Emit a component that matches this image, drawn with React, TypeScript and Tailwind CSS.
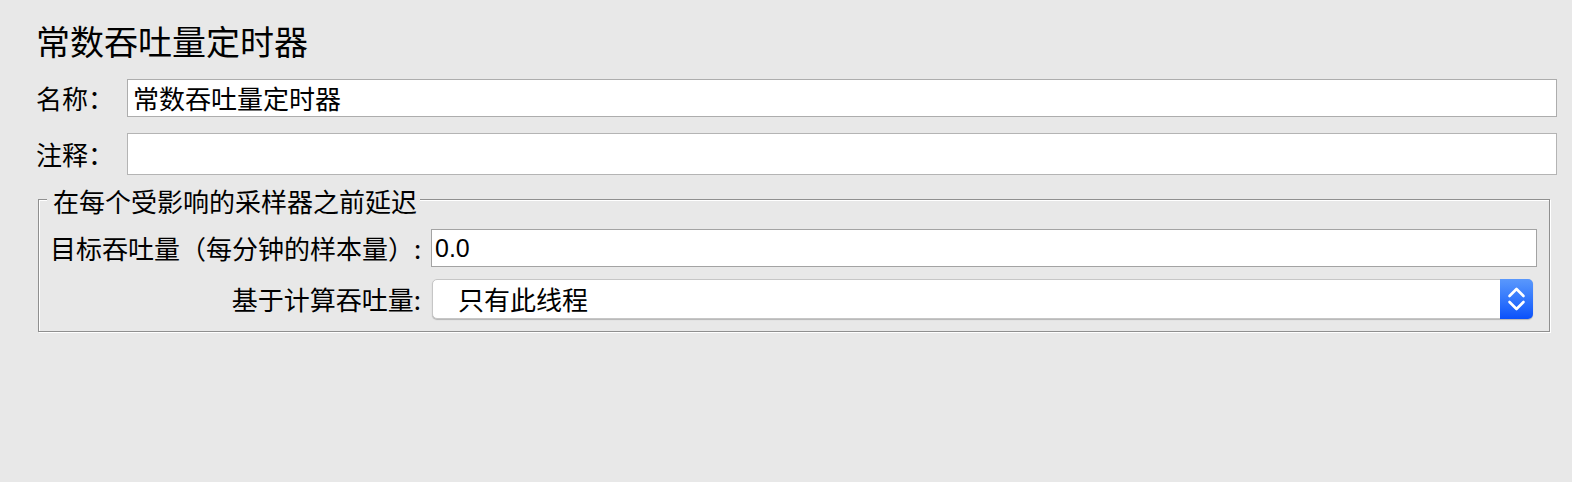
import React from "react";

function Chevrons() {
  return (
    <svg width="33" height="40" viewBox="0 0 33 40" fill="none">
      <path d="M9.5 17 L16.5 10 L23.5 17" stroke="#fff" strokeWidth="2.6" strokeLinecap="round" strokeLinejoin="round" />
      <path d="M9.5 23 L16.5 30 L23.5 23" stroke="#fff" strokeWidth="2.6" strokeLinecap="round" strokeLinejoin="round" />
    </svg>
  );
}

export default function App() {
  return (
    <div className="min-h-screen w-full bg-[#e8e8e8] pt-[24px] pl-[36px] pr-[15px] text-black font-['Noto_Sans_CJK_SC','Noto_Sans',sans-serif]">
      <h1 className="h-[34px] text-[34px] leading-[34px] font-normal">常数吞吐量定时器</h1>

      <div className="mt-[21px] flex h-[38px] items-center">
        <div className="w-[91px] text-[26px] leading-[26px]">名称：</div>
        <div className="flex h-full flex-1 items-center border border-[#adadad] bg-white pl-[5px] text-[26px] leading-[26px]">
          常数吞吐量定时器
        </div>
      </div>

      <div className="mt-[16px] flex h-[42px] items-center">
        <div className="w-[91px] text-[26px] leading-[26px]">注释：</div>
        <div className="h-full flex-1 border border-[#b4b4b4] bg-white" />
      </div>

      <div className="relative mt-[24px] ml-[2px] mr-[7px] border border-[#8f8f8f] pt-[29px] pb-[12px] pl-[11px] shadow-[inset_1px_1px_0_#ffffff,1px_1px_0_#ffffff]">
        <div className="absolute left-[8px] -top-[12px] bg-[#e8e8e8] pl-[6px] pr-[3px] text-[26px] leading-[26px] whitespace-nowrap">
          在每个受影响的采样器之前延迟
        </div>

        <div className="flex h-[38px] items-center pr-[12px]">
          <div className="w-[381px] whitespace-nowrap text-[26px] leading-[26px]">目标吞吐量（每分钟的样本量）:</div>
          <div className="flex h-full flex-1 items-center border border-[#a3a3a3] bg-white pl-[3px] font-['Liberation_Sans',Arial,sans-serif] text-[25px] leading-[25px]">
            0.0
          </div>
        </div>

        <div className="mt-[12px] flex h-[40px] items-center pr-[16px]">
          <div className="w-[382px] whitespace-nowrap pr-[11px] text-right text-[26px] leading-[26px]">基于计算吞吐量:</div>
          <div className="flex h-full flex-1 items-stretch rounded-[5px] border border-[#c6c6c6] bg-white shadow-[0_1px_1px_rgba(0,0,0,0.22)]">
            <div className="flex flex-1 items-center pl-[25px] text-[26px] leading-[26px]">只有此线程</div>
            <div className="-my-px -mr-px flex w-[33px] items-center justify-center rounded-r-[5px] bg-gradient-to-b from-[#5a98fc] to-[#0a50fb]">
              <Chevrons />
            </div>
          </div>
        </div>
      </div>
    </div>
  );
}
